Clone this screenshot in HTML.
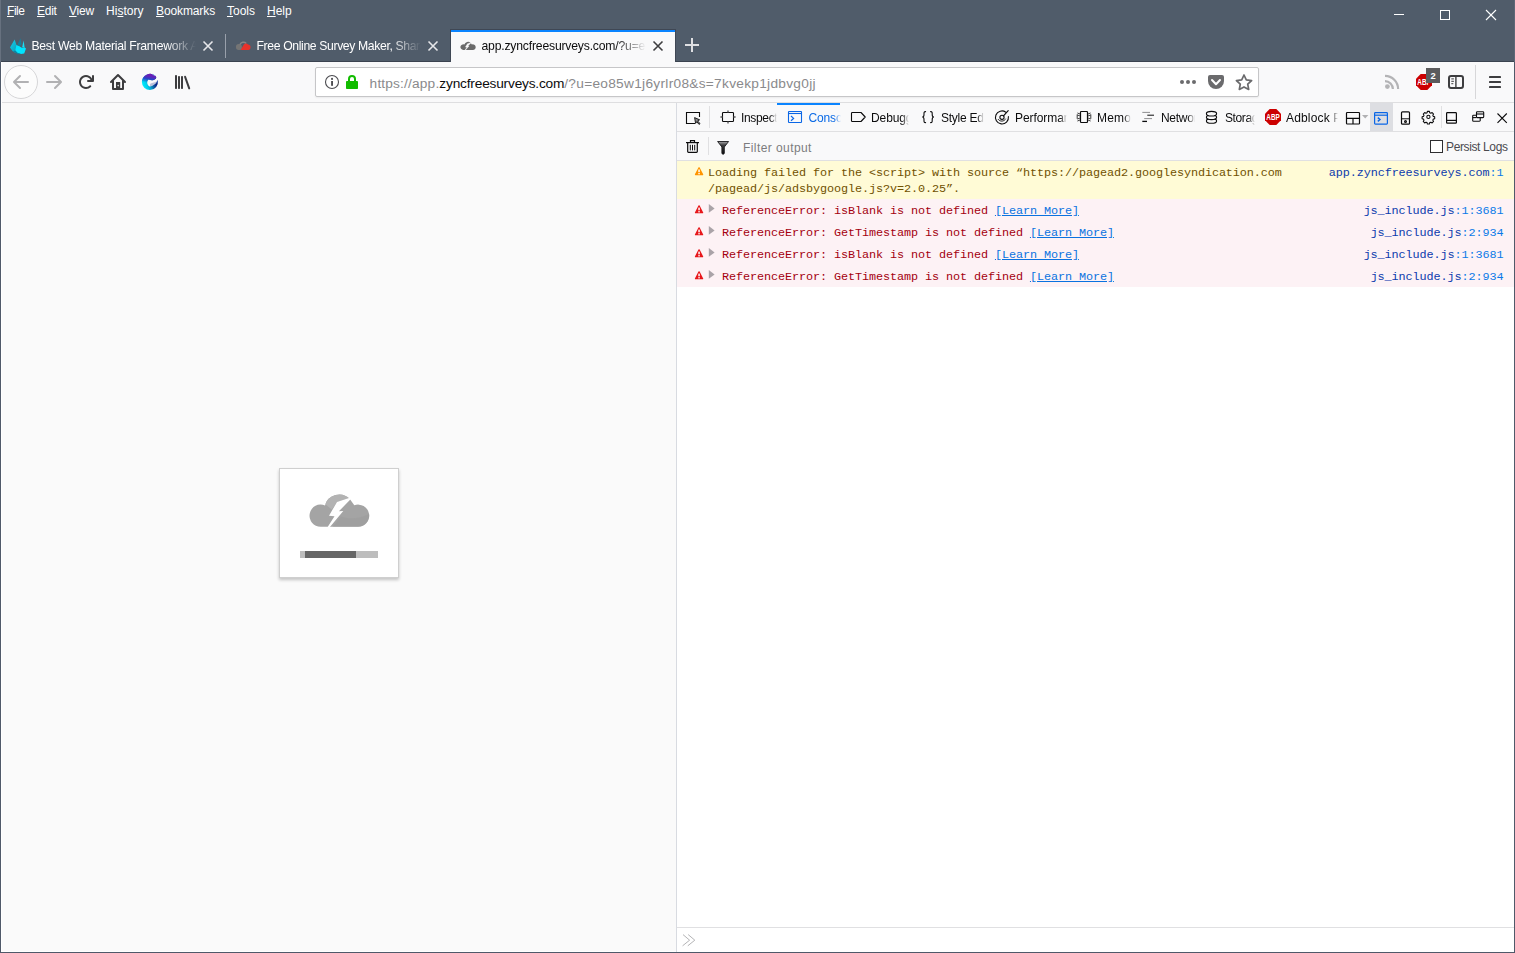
<!DOCTYPE html>
<html lang="en">
<head>
<meta charset="utf-8">
<title>app.zyncfreesurveys.com</title>
<style>
*{box-sizing:border-box;margin:0;padding:0}
html,body{width:1515px;height:953px;overflow:hidden;background:#505c6a}
body{font-family:"Liberation Sans",sans-serif;font-size:12px;color:#fff;position:relative}
.abs{position:absolute}
svg{position:absolute;overflow:visible}
/* ---------- chrome ---------- */
#win{position:absolute;left:0;top:0;width:1515px;height:953px;background:#505c6a}
#menubar span{position:absolute;top:4px;font-size:12px;line-height:14px;color:#fff;white-space:nowrap}
#menubar u{text-decoration:underline;text-underline-offset:1px}
.tabtitle{position:absolute;top:38px;height:16px;line-height:16px;font-size:12.2px;white-space:nowrap;overflow:hidden;color:#fff}
.fade-dark{-webkit-mask-image:linear-gradient(to right,#000 calc(100% - 32px),transparent calc(100% - 2px));mask-image:linear-gradient(to right,#000 calc(100% - 32px),transparent calc(100% - 2px))}
#navbar{position:absolute;left:1px;top:62px;width:1513px;height:41px;background:#f9f9fa;border-bottom:1px solid #dedee0}
#urlbar{position:absolute;left:314px;top:5px;width:944px;height:30px;background:#fff;border:1px solid #c6c6c8;border-radius:2px;box-shadow:0 1px 2px rgba(0,0,0,.06)}
#urltext{position:absolute;left:53.6px;top:7px;font-size:13.7px;line-height:17px;color:#8a8a8c;white-space:nowrap;}
#urltext b{font-weight:normal;color:#0c0c0d}
/* ---------- page ---------- */
#page{position:absolute;left:1px;top:103px;width:675px;height:849px;background:#fafafa}
#loader{position:absolute;left:278px;top:365px;width:120px;height:110px;background:#fff;border:1px solid #cfcfcf;box-shadow:0 2px 3px rgba(0,0,0,.22)}
/* ---------- devtools ---------- */
#split{position:absolute;left:676px;top:103px;width:1px;height:849px;background:#d8dbe1}
#dt{position:absolute;left:677px;top:103px;width:837px;height:849px;background:#fff;color:#0c0c0d}
#dttabs{position:absolute;left:0;top:0;width:837px;height:29px;background:#f9f9fa;border-bottom:1px solid #e0e0e2}
#dttabs .t{position:absolute;top:7px;height:16px;line-height:16px;font-size:12px;color:#0c0c0d;white-space:nowrap;overflow:hidden}
.fade-l{-webkit-mask-image:linear-gradient(to right,#000 calc(100% - 7px),transparent 100%);mask-image:linear-gradient(to right,#000 calc(100% - 7px),transparent 100%)}
#filterbar{position:absolute;left:0;top:29px;width:837px;height:29px;background:#f9f9fa;border-bottom:1px solid #e0e0e2}
#out{position:absolute;left:0;top:58px;width:837px;font-family:"Liberation Mono",monospace;font-size:11.8px;letter-spacing:-0.081px}
.row{position:relative;width:837px;white-space:pre}
.row .msg{position:absolute;left:0;top:0}
.row .loc{position:absolute;right:10.4px;top:0;color:#0c3aad}
.row .loc i{font-style:normal;color:#0a7ae8}
.warn{height:38px;background:#fffbd6;color:#715100}
.err{height:22px;background:#fdf2f5;color:#a4000f}
.err a{color:#0a72e0;text-decoration:underline}
#jsterm{position:absolute;left:0;top:824px;width:837px;height:25px;border-top:1px solid #e0e0e2;background:#fff}
</style>
</head>
<body>
<div id="win">

<div class="abs" style="left:0;top:0;width:1px;height:62px;background:#67717f"></div>
<div class="abs" style="left:1514px;top:0;width:1px;height:62px;background:#5d6776"></div>
<div class="abs" style="left:0;top:62px;width:1px;height:891px;background:#4f5969"></div>
<div class="abs" style="left:1514px;top:62px;width:1px;height:891px;background:#4f5969"></div>
<div class="abs" style="left:0;top:952px;width:1515px;height:1px;background:#4f5969"></div>
<!-- menu bar -->
<div id="menubar">
<span style="left:7px;letter-spacing:-0.46px"><u>F</u>ile</span>
<span style="left:37px;letter-spacing:-0.27px"><u>E</u>dit</span>
<span style="left:69px;letter-spacing:-0.22px"><u>V</u>iew</span>
<span style="left:106px;letter-spacing:0.02px">Hi<u>s</u>tory</span>
<span style="left:156px;letter-spacing:-0.11px"><u>B</u>ookmarks</span>
<span style="left:227px"><u>T</u>ools</span>
<span style="left:267px"><u>H</u>elp</span>
</div>

<!-- tabs -->
<div class="abs" style="left:1px;top:61px;width:1513px;height:1px;background:#3b4350"></div>
<div class="abs" style="left:450px;top:29px;width:226px;height:33px;background:#3f4754"></div>
<div class="abs" style="left:451px;top:30px;width:224px;height:32px;background:#f9f9fa;border-top:2px solid #0a84ff"></div>
<div class="abs" style="left:225px;top:34px;width:1px;height:24px;background:#99a0ab"></div>
<div class="tabtitle fade-dark" style="left:31.5px;width:166px;letter-spacing:-0.27px">Best Web Material Framework And</div>
<div class="tabtitle fade-dark" style="left:256.5px;width:166px;letter-spacing:-0.36px">Free Online Survey Maker, Share</div>
<div class="tabtitle fade-dark" style="left:481.5px;width:166px;color:#0c0c0d;letter-spacing:-0.19px">app.zyncfreesurveys.com/?u=eo85</div>

<!-- nav bar -->
<div id="navbar">
  <div id="urlbar">
    <div id="urltext"><span style="letter-spacing:0.17px">https://app.</span><b style="letter-spacing:-0.193px">zyncfreesurveys.com</b><span style="letter-spacing:0.288px">/?u=eo85w1j6yrlr08&amp;s=7kvekp1jdbvg0jj</span></div>
  </div>
</div>

<!-- page -->
<div id="page">
  <div id="loader">
    <div class="abs" style="left:20px;top:82px;width:78px;height:7px;background:#bdbdbd"></div>
    <div class="abs" style="left:25px;top:82px;width:51px;height:7px;background:#666"></div>
  </div>
</div>

<div class="abs" style="left:1px;top:62px;width:1px;height:890px;background:#fff"></div>
<div class="abs" style="left:1px;top:951px;width:675px;height:1px;background:#fff"></div>
<div id="split"></div>

<!-- devtools -->
<div id="dt">
  <div id="dttabs">
    <div class="t fade-l" style="left:64px;width:36px;letter-spacing:-0.34px">Inspector</div>
    <div class="t fade-l" style="left:131.5px;width:32px;color:#0a6ae6;letter-spacing:-0.15px">Console</div>
    <div class="t fade-l" style="left:194px;width:38px;letter-spacing:-0.1px">Debugger</div>
    <div class="t fade-l" style="left:264px;width:43px;letter-spacing:-0.26px">Style Editor</div>
    <div class="t fade-l" style="left:338px;width:52px;letter-spacing:-0.07px">Performance</div>
    <div class="t fade-l" style="left:420px;width:34px;letter-spacing:0.2px">Memory</div>
    <div class="t fade-l" style="left:484px;width:34px;letter-spacing:-0.3px">Network</div>
    <div class="t fade-l" style="left:548px;width:30px;letter-spacing:-0.4px">Storage</div>
    <div class="t fade-l" style="left:609px;width:52px;letter-spacing:0.16px">Adblock Plus</div>
  </div>
  <div id="filterbar">
    <div class="abs" style="left:66px;top:8px;font-size:12px;line-height:16px;color:#7c7c7e;letter-spacing:0.42px;white-space:nowrap">Filter output</div>
    <div class="abs" style="left:753px;top:8px;width:13px;height:13px;border:1px solid #2e2e30;background:#fff"></div>
    <div class="abs" style="left:769px;top:7px;font-size:12px;line-height:16px;color:#4a4a4f;white-space:nowrap;letter-spacing:-0.37px">Persist Logs</div>
  </div>
  <div id="out">
    <div class="row warn"><div class="msg" style="left:31px;top:4px;line-height:16px">Loading failed for the &lt;script&gt; with source “https://pagead2.googlesyndication.com
/pagead/js/adsbygoogle.js?v=2.0.25”.</div><div class="loc" style="top:4px;line-height:16px">app.zyncfreesurveys.com<i>:1</i></div></div>
    <div class="row err"><div class="msg" style="left:45px;top:4px;line-height:16px">ReferenceError: isBlank is not defined <a>[Learn More]</a></div><div class="loc" style="top:4px;line-height:16px">js_include.js<i>:1:3681</i></div></div>
    <div class="row err"><div class="msg" style="left:45px;top:4px;line-height:16px">ReferenceError: GetTimestamp is not defined <a>[Learn More]</a></div><div class="loc" style="top:4px;line-height:16px">js_include.js<i>:2:934</i></div></div>
    <div class="row err"><div class="msg" style="left:45px;top:4px;line-height:16px">ReferenceError: isBlank is not defined <a>[Learn More]</a></div><div class="loc" style="top:4px;line-height:16px">js_include.js<i>:1:3681</i></div></div>
    <div class="row err"><div class="msg" style="left:45px;top:4px;line-height:16px">ReferenceError: GetTimestamp is not defined <a>[Learn More]</a></div><div class="loc" style="top:4px;line-height:16px">js_include.js<i>:2:934</i></div></div>
  </div>
  <div id="jsterm"></div>
</div>

<!-- ============ ICON OVERLAY : browser chrome ============ -->
<svg id="ic1" width="1515" height="110" viewBox="0 0 1515 110" style="left:0;top:0">
  <defs>
    <linearGradient id="gWave" x1="0.2" y1="1" x2="0.8" y2="0">
      <stop offset="0" stop-color="#00e6f5"/><stop offset="0.45" stop-color="#0a6fd0"/><stop offset="0.8" stop-color="#2b2bb0"/><stop offset="1" stop-color="#7a1fb5"/>
    </linearGradient>
    <linearGradient id="gWave2" x1="0" y1="0" x2="1" y2="1">
      <stop offset="0" stop-color="#1e3fc0"/><stop offset="1" stop-color="#07186e"/>
    </linearGradient>
    <linearGradient id="gWaveH" gradientUnits="userSpaceOnUse" x1="143" y1="87.500" x2="158" y2="82">
      <stop offset="0" stop-color="#00f0ff"/><stop offset="0.28" stop-color="#00d0ee"/><stop offset="0.5" stop-color="#0a93c4"/><stop offset="0.7" stop-color="#0b4a9c"/><stop offset="0.85" stop-color="#0a2283"/><stop offset="1" stop-color="#07176c"/>
    </linearGradient>
    <linearGradient id="gWaveV" gradientUnits="userSpaceOnUse" x1="150.500" y1="73.500" x2="149" y2="83">
      <stop offset="0" stop-color="#7a18b0"/><stop offset="0.35" stop-color="#5a27bb"/><stop offset="0.58" stop-color="#2b43c6"/><stop offset="0.8" stop-color="#1f58cc" stop-opacity="0.55"/><stop offset="1" stop-color="#1f6fd0" stop-opacity="0"/>
    </linearGradient>
    <linearGradient id="gMat" x1="0" y1="0" x2="1" y2="1">
      <stop offset="0" stop-color="#11d4ee"/><stop offset="1" stop-color="#0e8fae"/>
    </linearGradient>
  </defs>

  <!-- window controls -->
  <g stroke="#fff" stroke-width="1" fill="none" shape-rendering="crispEdges">
    <line x1="1394" y1="14.5" x2="1404" y2="14.5"/>
    <rect x="1440.5" y="10.5" width="9" height="9"/>
  </g>
  <g stroke="#fff" stroke-width="1.1" fill="none">
    <line x1="1486" y1="10" x2="1496" y2="20"/><line x1="1496" y1="10" x2="1486" y2="20"/>
  </g>

  <!-- tab 1 favicon -->
  <g>
    <path d="M14.6 39.6 L16.6 45.2 L19 49.5 L15.5 53 L12.5 51 L10 47.6 Z" fill="url(#gMat)"/>
    <path d="M20.5 38.3 L21.6 44 L19.5 47 L17.6 44.3 Z" fill="#1a7d99"/>
    <path d="M23.6 40.6 L24.6 47.5 L22.2 47 Z" fill="#19dff5"/>
    <path d="M16.4 45 L19.4 46.3 L21.8 47.8 L24.4 47.3 L26 48.4 L24.2 53.6 L21 54 L17.6 53 L15.3 50.5 Z" fill="#00e5ff"/>
    <path d="M15.3 50.5 L17.6 53 L21 54 L18 54.2 L15.2 52.8 L13 51.3 Z" fill="#0d86a3"/>
  </g>
  <!-- tab close buttons -->
  <g stroke="#e6e7ea" stroke-width="1.6" fill="none" stroke-linecap="butt">
    <path d="M203.5 41.5 L212.5 50.5 M212.5 41.5 L203.5 50.5"/>
    <path d="M428.5 41.5 L437.5 50.5 M437.5 41.5 L428.5 50.5"/>
  </g>
  <path d="M653.5 41.5 L662.5 50.5 M662.5 41.5 L653.5 50.5" stroke="#3e3e40" stroke-width="1.6" fill="none"/>
  <!-- new tab -->
  <path d="M685 45 H699 M692 38 V52" stroke="#dfe0e3" stroke-width="2" fill="none"/>

  <!-- tab 2 favicon : grey + red cloud -->
  <g>
    <circle cx="238.9" cy="46.9" r="3" fill="#757575"/>
    <rect x="238.5" y="47.6" width="4" height="2.3" fill="#757575"/>
    <path d="M240 44.6 A3.7 3.7 0 0 1 246.2 43.4" stroke="#858585" stroke-width="1.5" fill="none"/>
    <path d="M240.6 49.9 L244 44.300 A3.4 3.4 0 0 1 248.2 44.600 A2.9 2.9 0 0 1 250.500 47.800 A2.1 2.1 0 0 1 248.600 49.900 Z" fill="#e8322b"/>
  </g>

  <!-- tab 3 favicon : grey cloud with bolt -->
  <g transform="translate(460.4 41.8) scale(0.2563 0.2508) translate(-309.5 -494.5)">
    <path d="M320.6 526.8 A11.1 11.1 0 1 1 325 505.5 A14.7 14.7 0 0 1 349.8 499.100 L354.3 505.27 A11.1 11.1 0 1 1 358.1 526.8 Z" fill="#6a6a6a"/>
    <path d="M351.2 497.2 L337 501.9 L329 515.7 L334.5 516.2 L327.5 527.3 L329.7 527.3 L343.3 511.1 L338.9 511.3 L351.8 497.9 Z" fill="#f9f9fa" stroke="#f9f9fa" stroke-width="1.2"/>
  </g>

  <!-- back button -->
  <circle cx="21" cy="82" r="16.5" fill="#fcfcfc" stroke="#d6d6d8" stroke-width="1"/>
  <g transform="translate(13,74)"><path fill="#b1b1b3" d="M15 7H3.414l4.293-4.293a1 1 0 0 0-1.414-1.414l-6 6a1 1 0 0 0 0 1.414l6 6a1 1 0 0 0 1.414-1.414L3.414 9H15a1 1 0 0 0 0-2z"/></g>
  <!-- forward -->
  <g transform="translate(46,74)"><path fill="#b1b1b3" d="M15.707 7.293l-6-6a1 1 0 0 0-1.414 1.414L12.586 7H1a1 1 0 0 0 0 2h11.586l-4.293 4.293a1 1 0 1 0 1.414 1.414l6-6a1 1 0 0 0 0-1.414z"/></g>
  <!-- reload -->
  <g transform="translate(78,74)"><path fill="#3d3d3f" d="M15 1a1 1 0 0 0-1 1v2.418A6.995 6.995 0 1 0 8 15a6.954 6.954 0 0 0 4.950-2.050 1 1 0 0 0-1.414-1.414A5.019 5.019 0 1 1 12.549 6H10a1 1 0 0 0 0 2h5a1 1 0 0 0 1-1V2a1 1 0 0 0-1-1z"/></g>
  <!-- home -->
  <g stroke="#3d3d3f" stroke-width="2" fill="none" stroke-linecap="round" stroke-linejoin="round">
    <path d="M111 82 L118 75 L125 82"/>
    <path d="M113 81 V89 H123 V81"/>
  </g>
  <rect x="116" y="82" width="4.2" height="7" fill="#3d3d3f"/>
  <circle cx="118.2" cy="85.6" r="0.8" fill="#e4e4e6"/>
  <!-- wave extension icon -->
  <g>
    <clipPath id="cpWave"><path d="M157.6 80.1 A8.1 8.1 0 0 1 150 90.1 A8.1 8.1 0 0 1 141.9 82 A8.1 8.1 0 0 1 155.2 75.8 C156.2 76.600 156.5 77.600 155.9 78.4 C154 80.5 151 80.5 148.6 79.4 C146.8 80.6 146.4 84.2 149.6 86.6 C153.5 86.1 156.5 83.5 157.6 80.1 Z"/></clipPath>
    <path d="M157.6 80.1 A8.1 8.1 0 0 1 150 90.1 A8.1 8.1 0 0 1 141.9 82 A8.1 8.1 0 0 1 155.2 75.8 C156.2 76.600 156.5 77.600 155.9 78.4 C154 80.5 151 80.5 148.6 79.4 C146.8 80.6 146.4 84.2 149.6 86.6 C153.5 86.1 156.5 83.5 157.6 80.1 Z" fill="url(#gWaveH)"/>
    <g clip-path="url(#cpWave)">
      <rect x="141" y="73" width="18" height="12" fill="url(#gWaveV)"/>
    </g>
    <path d="M152.2 74.2 A8.1 8.1 0 0 1 155.2 75.9" fill="none" stroke="#8cf0ff" stroke-width="0.7" opacity="0.9"/>
    <path d="M150.2 86.3 C152.8 85.9 155.6 83.8 156.9 81.2 C155 82.2 152.6 82.6 150.6 83.6 C149.8 84.4 149.8 85.400 150.2 86.3 Z" fill="#1b2f8c" opacity="0.28"/>
  </g>
  <!-- library -->
  <g fill="#3d3d3f">
    <rect x="175" y="75" width="2" height="14" rx="0.8"/>
    <rect x="178" y="76" width="2" height="13" rx="0.8"/>
    <rect x="181" y="76" width="2" height="13" rx="0.8"/>
    <path d="M185.1 76.8 L189.2 88.4" stroke="#3d3d3f" stroke-width="2" stroke-linecap="round"/>
  </g>

  <!-- url bar : identity icons -->
  <circle cx="332" cy="82" r="6.5" fill="none" stroke="#4c4c50" stroke-width="1.1"/>
  <rect x="331.1" y="81" width="1.9" height="4.8" fill="#4c4c50"/>
  <circle cx="332.05" cy="78.9" r="1.05" fill="#4c4c50"/>
  <rect x="346" y="81" width="12" height="8" rx="0.8" fill="#12bc00"/>
  <path d="M349 82 V79 A3 3 0 0 1 355 79 V82" fill="none" stroke="#12bc00" stroke-width="2"/>
  <!-- page actions -->
  <g fill="#6b6b6d"><circle cx="1182" cy="82" r="2"/><circle cx="1188" cy="82" r="2"/><circle cx="1194" cy="82" r="2"/></g>
  <path d="M1208 77 A2 2 0 0 1 1210 75 H1222 A2 2 0 0 1 1224 77 V81 A8 8 0 0 1 1208 81 Z" fill="#6b6b6d"/>
  <path d="M1212 80 L1216 84.2 L1220 80" fill="none" stroke="#fff" stroke-width="2" stroke-linecap="round" stroke-linejoin="round"/>
  <path d="M1244.00 75.00 L1246.30 79.85 L1251.60 80.55 L1247.70 84.20 L1248.70 89.45 L1244.00 86.90 L1239.30 89.45 L1240.30 84.20 L1236.40 80.55 L1241.70 79.85Z" fill="none" stroke="#6b6b6d" stroke-width="1.7" stroke-linejoin="round"/>

  <!-- rss -->
  <g fill="none" stroke="#b4b4b6" stroke-width="2.2">
    <path d="M1385 75.9 A13.1 13.1 0 0 1 1398.1 89"/>
    <path d="M1385 81.1 A7.9 7.9 0 0 1 1392.9 89"/>
  </g>
  <circle cx="1387.4" cy="86.6" r="2.4" fill="#b4b4b6"/>
  <!-- adblock plus -->
  <path d="M1420.69 74.00 L1427.31 74.00 L1432.00 78.69 L1432.00 85.31 L1427.31 90.00 L1420.69 90.00 L1416.00 85.31 L1416.00 78.69Z" fill="#cc0000"/>
  <text x="1424" y="85.1" font-family="'Liberation Sans',sans-serif" font-weight="bold" font-size="8.6" fill="#fff" text-anchor="middle" textLength="13.4" lengthAdjust="spacingAndGlyphs">ABP</text>
  <rect x="1426" y="68" width="14" height="15" fill="#5b5b5d"/>
  <text x="1433" y="79" font-family="'Liberation Sans',sans-serif" font-weight="bold" font-size="9.4" fill="#fff" text-anchor="middle">2</text>
  <!-- sidebar -->
  <rect x="1449" y="76" width="14" height="12" rx="2" fill="none" stroke="#3d3d3f" stroke-width="2"/>
  <rect x="1455.2" y="76" width="1.4" height="12" fill="#3d3d3f"/>
  <g fill="#3d3d3f"><rect x="1451.3" y="78.4" width="2.6" height="1"/><rect x="1451.3" y="80.8" width="2.6" height="1"/><rect x="1451.3" y="83.2" width="2" height="1"/></g>
  <!-- separator + hamburger -->
  <rect x="1475" y="65" width="1" height="34" fill="#d7d7d9"/>
  <g fill="#3d3d3f"><rect x="1489" y="76" width="12" height="2" rx=".4"/><rect x="1489" y="81" width="12" height="2" rx=".4"/><rect x="1489" y="86" width="12" height="2" rx=".4"/></g>
</svg>

<!-- ============ ICON OVERLAY : devtools toolbar + filter bar ============ -->
<svg id="ic2" width="839" height="60" viewBox="676 102 839 60" style="left:676px;top:102px">
  <!-- selected tab line + split console highlight -->
  <rect x="777" y="103" width="63" height="2" fill="#0a84ff"/>
  <rect x="1370" y="103" width="23" height="28" fill="#dddee2"/>
  <!-- pick element -->
  <g fill="none" stroke="#0c0c0d" stroke-width="1.1">
    <path d="M699.5 117 V112.5 H686.5 V123.5 H695"/>
    <path d="M694.6 117.6 L699.6 119.8 L697.6 120.9 L700 123.6 L699 124.4 L696.8 121.7 L695.6 123.4 Z" fill="#8c8c8e" stroke-width="0.9"/>
  </g>
  <rect x="709" y="106" width="1" height="22" fill="#e0e0e2"/>
  <!-- inspector -->
  <g fill="none" stroke="#0c0c0d" stroke-width="1.1">
    <rect x="722.5" y="112.5" width="11" height="9" rx="0.8"/>
    <path d="M728 110.6 V112.5 M728 121.5 V123.4 M720.4 117 H722.5 M733.5 117 H735.6" stroke-width="1.4" stroke="#5a5a5c"/>
  </g>
  <!-- console (selected, blue) -->
  <g fill="none" stroke="#0a66e6" stroke-width="1.1">
    <rect x="788.5" y="111.5" width="13" height="11" rx="0.6"/>
    <path d="M788.5 113.5 H801.5"/>
    <path d="M791 116 L793.6 118.4 L791 120.8" stroke-width="1.2"/>
  </g>
  <!-- debugger -->
  <path d="M852.3 112.5 H861 L865.2 117 L861 121.5 H852.3 A0.8 0.8 0 0 1 851.5 120.7 V113.3 A0.8 0.8 0 0 1 852.3 112.5 Z" fill="none" stroke="#0c0c0d" stroke-width="1.1" stroke-linejoin="round"/>
  <!-- style editor braces -->
  <g fill="none" stroke="#0c0c0d" stroke-width="1.1" stroke-linecap="round">
    <path d="M925.6 111.6 C923.8 111.6 924 112.6 924 114.4 C924 116.2 923.6 117 922.3 117 C923.6 117 924 117.8 924 119.6 C924 121.6 923.8 122.6 925.6 122.6"/>
    <path d="M930.6 111.6 C932.4 111.6 932.2 112.6 932.2 114.4 C932.2 116.2 932.6 117 933.9 117 C932.6 117 932.2 117.8 932.2 119.6 C932.2 121.6 932.4 122.6 930.6 122.6"/>
  </g>
  <!-- performance gauge -->
  <g fill="none" stroke="#0c0c0d" stroke-width="1.1" stroke-linecap="round">
    <path d="M1005.8 112.2 A6.5 6.5 0 1 0 1008.4 116.6"/>
    <path d="M1005.6 119 A4.3 4.3 0 0 1 998.2 119.4" stroke-width="0.9"/>
    <circle cx="1002" cy="117.3" r="2.1"/>
    <path d="M1003.5 115.8 L1008.2 110.6" stroke-width="1.2"/>
  </g>
  <!-- memory chip -->
  <g fill="none" stroke="#0c0c0d">
    <rect x="1080.5" y="111.5" width="7" height="11" rx="0.8" stroke-width="1.2"/>
    <path d="M1080 114 l-2.6 -1 M1080 116 l-2.6 -1 M1080 118 l-2.6 1 M1080 120 l-2.6 1 M1077.2 114.4 v4.4" stroke-width="0.8"/>
    <path d="M1088 114 l2.6 -1 M1088 116 l2.6 -1 M1088 118 l2.6 1 M1088 120 l2.6 1 M1090.8 114.4 v4.4" stroke-width="0.8"/>
  </g>
  <!-- network -->
  <g fill="none">
    <path d="M1142.3 112.4 H1150" stroke="#8f8f91" stroke-width="1"/>
    <path d="M1147.3 115.2 H1154" stroke="#0c0c0d" stroke-width="1"/>
    <path d="M1144.2 118.6 H1152" stroke="#8f8f91" stroke-width="1"/>
    <path d="M1142.3 121.4 H1147" stroke="#0c0c0d" stroke-width="1.3"/>
  </g>
  <!-- storage -->
  <g fill="#f9f9fa" stroke="#0c0c0d" stroke-width="1.1">
    <ellipse cx="1211.5" cy="120.9" rx="5.1" ry="2.3"/>
    <ellipse cx="1211.5" cy="117.3" rx="5.1" ry="2.3"/>
    <ellipse cx="1211.5" cy="113.7" rx="5.1" ry="2.3"/>
  </g>
  <!-- adblock plus -->
  <path d="M1269.69 109.00 L1276.31 109.00 L1281.00 113.69 L1281.00 120.31 L1276.31 125.00 L1269.69 125.00 L1265.00 120.31 L1265.00 113.69Z" fill="#cc0000"/>
  <text x="1273" y="120.1" font-family="'Liberation Sans',sans-serif" font-weight="bold" font-size="8.6" fill="#fff" text-anchor="middle" textLength="13.4" lengthAdjust="spacingAndGlyphs">ABP</text>
  <!-- frames -->
  <g fill="none" stroke="#0c0c0d" stroke-width="1.2">
    <rect x="1346.500" y="112.5" width="13" height="11.5" rx="0.8"/>
    <path d="M1346.500 118.3 H1359.500 M1353 118.3 V124"/>
  </g>
  <path d="M1362 115 H1368.400 L1365.200 118.600 Z" fill="#b1b1b3"/>
  <!-- split console (active) -->
  <g fill="none" stroke="#0a66e6" stroke-width="1.2">
    <rect x="1374.600" y="112.6" width="12.8" height="11.5" rx="0.8"/>
    <path d="M1374.600 115.200 H1387.400"/>
    <path d="M1377.800 117.600 L1380 119.500 L1377.800 121.400" stroke-width="1.4"/>
  </g>
  <!-- responsive design -->
  <g fill="none" stroke="#0c0c0d" stroke-width="1.2">
    <rect x="1401.500" y="111.800" width="8" height="12.400" rx="1"/>
    <path d="M1401.500 118.800 H1409.500" stroke-width="1"/>
    <circle cx="1405.500" cy="121.500" r="0.900"/>
  </g>
  <!-- gear -->
  <g fill="none" stroke="#0c0c0d" stroke-width="1.25" stroke-linejoin="round" transform="translate(1428.4 116.9) scale(0.85) translate(-1428.5 -117)">
    <path d="M1427.300 110.500 h2.400 l0.400 1.700 l1.300 0.600 l1.500 -0.900 l1.700 1.700 l-0.900 1.500 l0.500 1.300 l1.700 0.400 v2.400 l-1.700 0.400 l-0.500 1.300 l0.900 1.500 l-1.700 1.700 l-1.500 -0.900 l-1.300 0.500 l-0.400 1.700 h-2.400 l-0.400 -1.700 l-1.300 -0.500 l-1.500 0.900 l-1.700 -1.700 l0.900 -1.500 l-0.500 -1.300 l-1.700 -0.400 v-2.400 l1.700 -0.400 l0.500 -1.300 l-0.900 -1.500 l1.700 -1.700 l1.500 0.900 l1.300 -0.600 Z"/>
    <circle cx="1428.500" cy="117" r="1.900"/>
  </g>
  <rect x="1441" y="106" width="1" height="22" fill="#e0e0e2"/>
  <!-- dock bottom -->
  <g fill="none" stroke="#0c0c0d" stroke-width="1.2">
    <rect x="1446.600" y="112.600" width="9.800" height="10.600" rx="0.800"/>
    <path d="M1446.600 120.400 H1456.400"/>
  </g>
  <!-- separate window -->
  <g fill="none" stroke="#0c0c0d" stroke-width="1.100">
    <rect x="1476.500" y="111.800" width="7.200" height="5.800" rx="0.800"/>
    <path d="M1476.500 114 H1483.700"/>
    <path d="M1476.500 115.300 H1473.500 A0.800 0.800 0 0 0 1472.700 116.100 V120.400 A0.800 0.800 0 0 0 1473.500 121.200 H1479.400 A0.800 0.800 0 0 0 1480.200 120.400 V117.600"/>
    <path d="M1472.700 117.600 H1476.500"/>
  </g>
  <!-- close -->
  <path d="M1497.500 113.500 L1506.800 122.800 M1506.800 113.500 L1497.500 122.800" stroke="#0c0c0d" stroke-width="1.1" fill="none"/>

  <!-- filter bar : trash -->
  <g fill="none" stroke="#0c0c0d" stroke-width="1.2">
    <path d="M686 142.600 H699"/>
    <path d="M690.500 142.600 V140.600 H694.500 V142.600"/>
    <path d="M687.700 142.600 V151.600 A0.800 0.800 0 0 0 688.500 152.400 H696.500 A0.800 0.800 0 0 0 697.300 151.600 V142.600"/>
    <path d="M690.300 144.800 V150.400 M692.500 144.800 V150.400 M694.700 144.800 V150.400" stroke-width="1"/>
  </g>
  <rect x="708" y="137" width="1" height="18" fill="#e0e0e2"/>
  <!-- funnel -->
  <defs><linearGradient id="gFun" x1="0" y1="0" x2="0" y2="1"><stop offset="0" stop-color="#a8a8aa"/><stop offset="0.3" stop-color="#3a3a3c"/><stop offset="1" stop-color="#0c0c0d"/></linearGradient></defs>
  <path d="M717.600 141.500 H728.600 L724.300 147 V153 A1.200 1.200 0 0 1 721.900 153 V147 Z" fill="url(#gFun)" stroke="#1a1a1c" stroke-width="0.9" stroke-linejoin="round"/>
</svg>

<!-- ============ ICON OVERLAY : console output ============ -->
<svg id="ic3" width="60" height="140" viewBox="676 160 60 140" style="left:676px;top:160px">
<path d="M699.05 167.80 L702.60 174.60 H695.50 Z" fill="#ff9400" stroke="#ff9400" stroke-width="1.3" stroke-linejoin="round"/><rect x="698.30" y="169.50" width="1.5" height="2.7" fill="#fff"/><rect x="698.30" y="173.00" width="1.5" height="1.3" fill="#fff"/>
<path d="M699.05 205.90 L702.60 212.70 H695.50 Z" fill="#e7161a" stroke="#e7161a" stroke-width="1.3" stroke-linejoin="round"/><rect x="698.30" y="207.60" width="1.5" height="2.7" fill="#fff"/><rect x="698.30" y="211.10" width="1.5" height="1.3" fill="#fff"/>
<path d="M708.8 204 L714.6 208.4 L708.8 212.8 Z" fill="#aaa3a8"/>
<path d="M699.05 227.90 L702.60 234.70 H695.50 Z" fill="#e7161a" stroke="#e7161a" stroke-width="1.3" stroke-linejoin="round"/><rect x="698.30" y="229.60" width="1.5" height="2.7" fill="#fff"/><rect x="698.30" y="233.10" width="1.5" height="1.3" fill="#fff"/>
<path d="M708.8 226 L714.6 230.4 L708.8 234.8 Z" fill="#aaa3a8"/>
<path d="M699.05 249.90 L702.60 256.70 H695.50 Z" fill="#e7161a" stroke="#e7161a" stroke-width="1.3" stroke-linejoin="round"/><rect x="698.30" y="251.60" width="1.5" height="2.7" fill="#fff"/><rect x="698.30" y="255.10" width="1.5" height="1.3" fill="#fff"/>
<path d="M708.8 248 L714.6 252.4 L708.8 256.8 Z" fill="#aaa3a8"/>
<path d="M699.05 271.90 L702.60 278.70 H695.50 Z" fill="#e7161a" stroke="#e7161a" stroke-width="1.3" stroke-linejoin="round"/><rect x="698.30" y="273.60" width="1.5" height="2.7" fill="#fff"/><rect x="698.30" y="277.10" width="1.5" height="1.3" fill="#fff"/>
<path d="M708.8 270 L714.6 274.4 L708.8 278.8 Z" fill="#aaa3a8"/>
</svg>
<!-- jsterm prompt -->
<svg id="ic4" width="20" height="16" viewBox="680 932 20 16" style="left:680px;top:932px"><path d="M683 934.600 L689.600 940.200 L682.600 945.800 M688.200 934.600 L694.800 940.200 L687.800 945.800" fill="none" stroke="#b4b4b6" stroke-width="1"/></svg>
<!-- loader cloud -->
<svg id="ic5" width="70" height="40" viewBox="305 490 70 40" style="left:305px;top:490px">
  <defs><clipPath id="cl"><path d="M320.6 526.8 A11.1 11.1 0 1 1 325 505.5 A14.7 14.7 0 0 1 349.8 499.100 L354.3 505.27 A11.1 11.1 0 1 1 358.1 526.8 Z"/></clipPath></defs>
  <path d="M320.6 526.8 A11.1 11.1 0 1 1 325 505.5 A14.7 14.7 0 0 1 349.8 499.100 L354.3 505.27 A11.1 11.1 0 1 1 358.1 526.8 Z" fill="#a4a4a4"/>
  <g clip-path="url(#cl)">
    <path d="M325.3 504.3 L331.8 509.6 L337 501.9 L351 497.3 L348 492 L330 492 L322 500 Z" fill="#b3b3b3"/>
    <path d="M341 516.5 C349 519.5 361 519 371 513 V530 H330 Z" fill="#9c9c9c" opacity="0.6"/>
  </g>
  <path d="M351.2 497.2 L337 501.9 L329 515.7 L334.5 516.2 L327.5 527.3 L329.7 527.3 L343.3 511.1 L338.9 511.3 L351.8 497.9 Z" fill="#fff"/>
</svg>

</div>
</body>
</html>
